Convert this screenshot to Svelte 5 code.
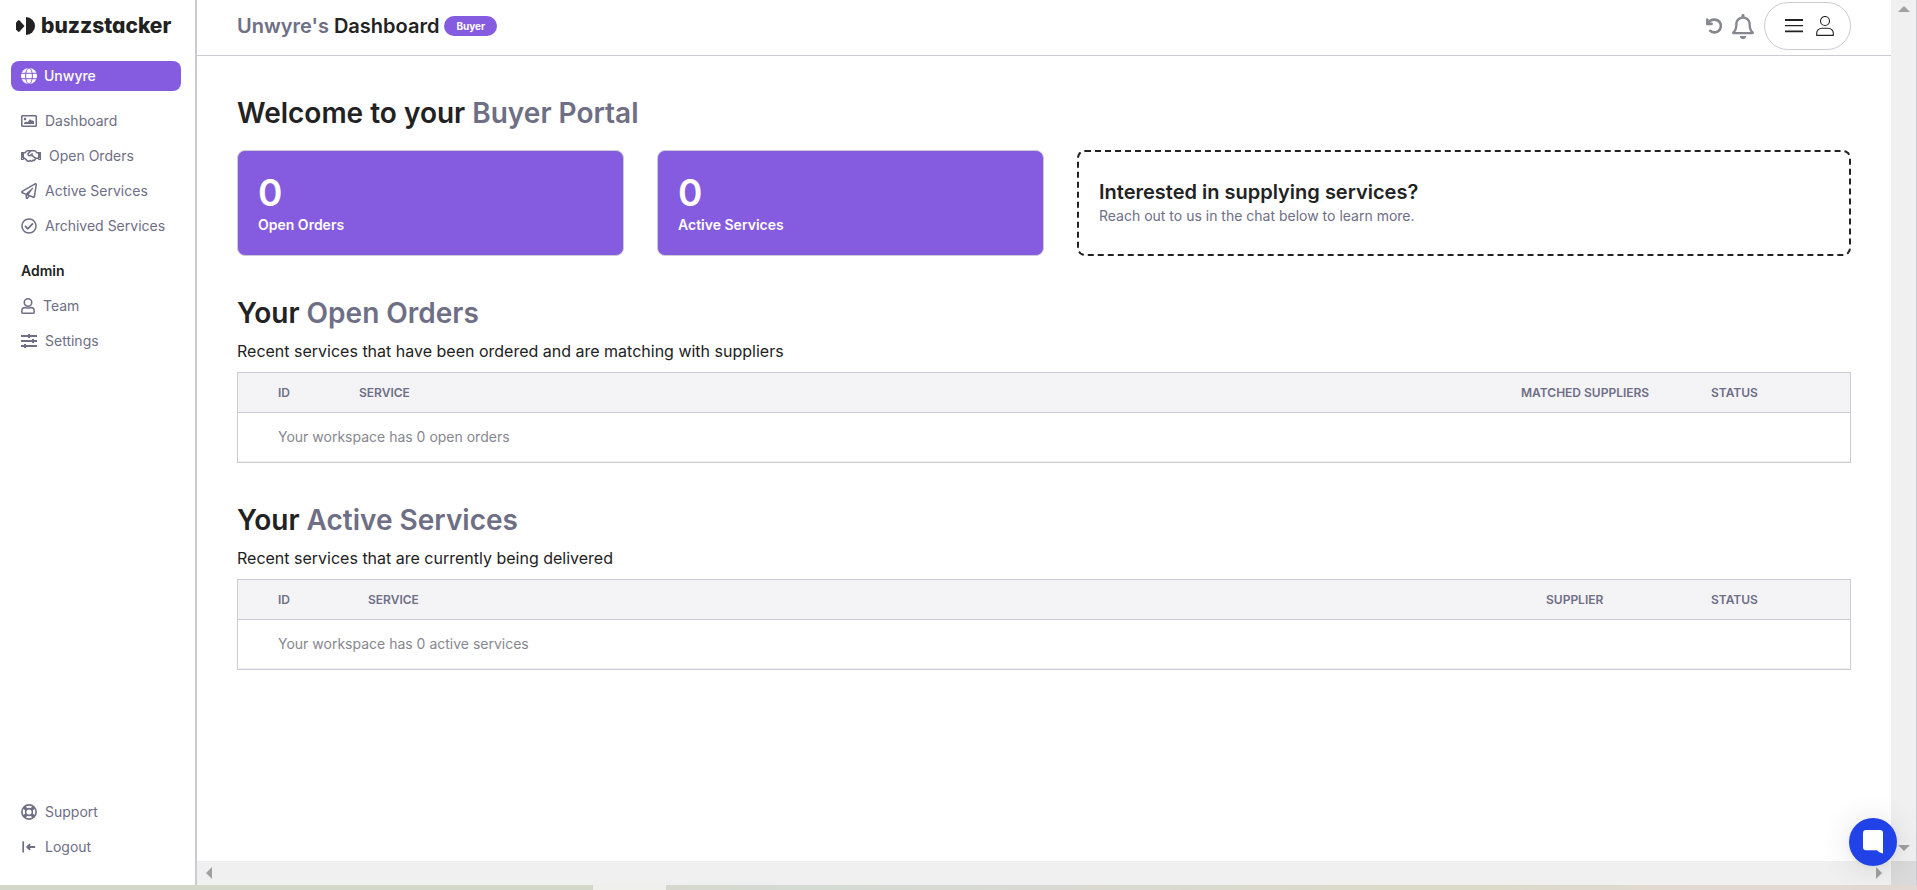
<script>
  const mainLinks = [
    { icon: 'image', label: 'Dashboard' },
    { icon: 'handshake', label: 'Open Orders' },
    { icon: 'plane', label: 'Active Services' },
    { icon: 'check', label: 'Archived Services' }
  ];
  const adminLinks = [
    { icon: 'user', label: 'Team' },
    { icon: 'sliders', label: 'Settings' }
  ];
  const footLinks = [
    { icon: 'ring', label: 'Support' },
    { icon: 'logout', label: 'Logout' }
  ];
  const stats = [
    { value: 0, label: 'Open Orders' },
    { value: 0, label: 'Active Services' }
  ];
  const sections = [
    {
      id: 'orders',
      title: 'Open Orders',
      text: 'Recent services that have been ordered and are matching with suppliers',
      third: 'Matched suppliers',
      empty: 'Your workspace has 0 open orders'
    },
    {
      id: 'services',
      title: 'Active Services',
      text: 'Recent services that are currently being delivered',
      third: 'Supplier',
      empty: 'Your workspace has 0 active services'
    }
  ];
</script>

{#snippet icon(name)}
  {#if name === 'image'}
    <svg width="16" height="16" viewBox="0 0 512 512" fill="currentColor" aria-hidden="true"><path d="M464 64H48C21.49 64 0 85.49 0 112v288c0 26.51 21.49 48 48 48h416c26.51 0 48-21.49 48-48V112c0-26.51-21.49-48-48-48zm-6 336H54a6 6 0 0 1-6-6V118a6 6 0 0 1 6-6h404a6 6 0 0 1 6 6v276a6 6 0 0 1-6 6zM128 152c-22 0-40 18-40 40s18 40 40 40 40-18 40-40-18-40-40-40zM96 352h320v-80l-32-32h-48l-24-32h-40l-24 32-24 48-40-8-40 8-48 24z" /></svg>
  {:else if name === 'handshake'}
    <svg width="20" height="16" viewBox="0 0 640 512" fill="currentColor" aria-hidden="true"><path d="M519.2 127.9l-47.6-47.6A56.252 56.252 0 0 0 432 64H205.2c-14.8 0-29.1 5.9-39.6 16.3L118 127.9H0v255.7h64c17.6 0 31.8-14.2 31.9-31.7h9.1l84.6 76.4c30.9 25.1 73.8 25.7 105.6 3.8 12.5 10.8 26 15.9 41.1 15.9 18.2 0 35.3-7.4 48.8-24 22.1 8.7 48.2 2.6 64-16.8l26.2-32.3c5.6-6.9 9.1-14.8 10.9-23h57.9c.1 17.5 14.4 31.7 31.9 31.7h64V127.9H519.2zM48 351.6c-8.8 0-16-7.2-16-16s7.2-16 16-16 16 7.2 16 16c0 8.9-7.2 16-16 16zm390-6.9l-26.1 32.2c-2.8 3.4-7.8 4-11.3 1.2l-23.900-19.400-30 36.500c-6 7.300-15 4.800-18 2.400l-36.800-31.500-15.600 19.200c-13.900 17.100-39.200 19.700-55.300 6.600l-97.300-88H96V175.8h41.9l61.7-61.6c2-.8 3.7-1.5 5.7-2.3H262l-38.7 35.5c-29.4 26.9-31.1 72.3-4.4 101.3 14.8 16.2 61.2 41.2 101.5 4.4l8.2-7.5 108.2 87.8c3.4 2.8 3.9 7.9 1.2 11.3zm106-40.8h-69.2c-2.3-2.8-4.9-5.4-7.7-7.7l-102.7-83.4 12.5-11.4c6.5-6 7-16.1 1-22.6L367 167.1c-6-6.5-16.1-6.9-22.6-1l-55.2 50.6c-9.5 8.700-25.700 9.400-34.600 0-9.300-9.900-8.500-25.100 1.200-33.900l65.6-60.100c7.400-6.800 17-10.500 27-10.500l83.700-.2c2.100 0 4.100.8 5.500 2.300l61.700 61.600H544v128zm48 47.700c-8.800 0-16-7.200-16-16s7.200-16 16-16 16 7.200 16 16c0 8.900-7.200 16-16 16z" /></svg>
  {:else if name === 'plane'}
    <svg width="16" height="16" viewBox="0 0 512 512" fill="currentColor" aria-hidden="true"><path d="M440 6.5L24 246.4c-34.4 19.9-31.1 70.8 5.7 85.9L144 379.6V464c0 46.4 59.2 65.5 86.6 28.6l43.8-59.1 111.9 46.2c5.9 2.4 12.1 3.6 18.3 3.6 8.2 0 16.3-2.1 23.6-6.2 12.8-7.2 21.6-20 23.9-34.5l59.4-387.2c6.1-40.1-36.9-68.8-71.5-48.9zM192 464v-64.6l36.6 15.1L192 464zm212.6-28.7l-153.8-63.5L391 169.5c10.7-15.5-9.5-33.5-23.7-21.2L155.8 332.6 48 288 464 48l-59.4 387.3z" /></svg>
  {:else if name === 'check'}
    <svg width="16" height="16" viewBox="0 0 512 512" fill="currentColor" aria-hidden="true"><path d="M256 8C119.033 8 8 119.033 8 256s111.033 248 248 248 248-111.033 248-248S392.967 8 256 8zm0 48c110.532 0 200 89.451 200 200 0 110.532-89.451 200-200 200-110.532 0-200-89.451-200-200 0-110.532 89.451-200 200-200m140.204 130.267l-22.536-22.718c-4.667-4.705-12.265-4.736-16.97-.068L215.346 303.697l-59.792-60.277c-4.667-4.705-12.265-4.736-16.97-.069l-22.719 22.536c-4.705 4.667-4.736 12.265-.068 16.971l90.781 91.516c4.667 4.705 12.265 4.736 16.97.068l172.589-171.204c4.704-4.668 4.734-12.266.067-16.971z" /></svg>
  {:else if name === 'user'}
    <svg width="14" height="16" viewBox="0 0 14 16" fill="none" stroke="currentColor" stroke-width="1.5" aria-hidden="true"><circle cx="7" cy="4.5" r="3.75" /><path d="M4.2 9.6c1 .4 1.700.5 2.800.5s1.800-.1 2.800-.5c2.100 0 3.450 1.700 3.450 3.600v1c0 .6-.4 1.050-1 1.050H1.750c-.6 0-1-.45-1-1.050v-1c0-1.900 1.350-3.600 3.450-3.600z" /></svg>
  {:else if name === 'sliders'}
    <svg width="16" height="16" viewBox="0 0 16 16" fill="none" stroke="currentColor" stroke-width="2" aria-hidden="true"><path d="M0 3h16M0 8h16M0 13h16" /><path d="M8 1v4M12 6v4M4 11v4" /></svg>
  {:else if name === 'ring'}
    <svg width="16" height="16" viewBox="0 0 16 16" fill="none" stroke="currentColor" aria-hidden="true"><circle cx="8" cy="8" r="7.100" stroke-width="1.700" /><circle cx="8" cy="8" r="3.400" stroke-width="1.600" /><path d="M2.800 2.800l3 3M13.200 2.800l-3 3M2.800 13.200l3-3M13.200 13.200l-3-3" stroke-width="3.200" /></svg>
  {:else}
    <svg width="16" height="16" viewBox="0 0 16 16" fill="none" stroke="currentColor" stroke-width="1.900" stroke-linecap="round" stroke-linejoin="round" aria-hidden="true"><path d="M2.200 2.300v11.200" stroke-width="1.700" stroke-linecap="butt" /><path d="M13.400 8H6.200M8.600 5.700L6.200 8l2.400 2.300" /></svg>
  {/if}
{/snippet}

{#snippet links(items)}
  <ul>
    {#each items as item}
      <li><a href="#top">{@render icon(item.icon)}<span>{item.label}</span></a></li>
    {/each}
  </ul>
{/snippet}

<div class="screen" id="top">
  <aside>
    <a class="brand" href="#top">
      <svg width="19" height="18" viewBox="0 0 19 18" fill="currentColor" aria-hidden="true"><path d="M0 5.500L2.500 3l1.100.5L8.500 9l-4.900 5.500-1.100.5L0 12.500z" /><path d="M10 0a9 9 0 0 1 0 18z" /></svg>
      <span>buzzstacker</span>
    </a>
    <button class="workspace">
      <svg width="16" height="16" viewBox="0 0 16 16" aria-hidden="true"><circle cx="8" cy="8" r="8" fill="#fff" /><g fill="none" stroke="#855be0" stroke-width="1"><ellipse cx="8" cy="8" rx="3.400" ry="8" /><path d="M0 5.300h16M0 10.700h16" /></g></svg>
      <span>Unwyre</span>
    </button>
    <nav>
      {@render links(mainLinks)}
      <h3>Admin</h3>
      {@render links(adminLinks)}
      <div class="foot">{@render links(footLinks)}</div>
    </nav>
  </aside>

  <div class="view">
    <header>
      <div class="title"><h1><span>Unwyre's</span> Dashboard</h1><b class="badge">Buyer</b></div>
      <div class="tools">
        <button aria-label="Refresh"><svg width="16" height="16" viewBox="0 0 16 16" fill="none" stroke="#87878f" stroke-width="2.600" stroke-linecap="round" stroke-linejoin="round" aria-hidden="true"><path d="M1.300 1.600v4.300h4.300" /><path d="M1.800 5.600C3 3.200 5.500 1.600 8.400 1.600a6.400 6.400 0 1 1-4.200 11.200" /></svg></button>
        <button aria-label="Notifications"><svg width="22" height="25" viewBox="0 0 448 512" fill="#87878f" aria-hidden="true"><path d="M439.390 362.290c-19.320-20.760-55.470-51.990-55.470-154.290 0-77.700-54.480-139.900-127.940-155.160V32c0-17.670-14.320-32-31.980-32s-31.980 14.330-31.980 32v20.840C118.560 68.100 64.080 130.300 64.080 208c0 102.300-36.150 133.530-55.470 154.290-6 6.450-8.660 14.160-8.610 21.710.11 16.400 12.980 32 32.100 32h383.800c19.120 0 32-15.600 32.100-32 .05-7.550-2.610-15.270-8.610-21.710zM67.530 368c21.220-27.970 44.420-74.330 44.530-159.420 0-.2-.06-.38-.06-.58 0-61.860 50.140-112 112-112s112 50.140 112 112c0 .2-.06.38-.06.58.11 85.100 23.310 131.460 44.530 159.420H67.530zM224 512c35.320 0 63.970-28.650 63.970-64H160.030c0 35.350 28.650 64 63.970 64z" /></svg></button>
        <button class="account" aria-label="Account menu">
          <svg width="18" height="14" viewBox="0 0 18 14" fill="#222" aria-hidden="true"><path d="M0 0h18v2H0zM0 6h18v1.300H0zM0 11.500h18v1.700H0z" /></svg>
          <svg width="18" height="20" viewBox="0 0 18 20" fill="none" stroke="#222" stroke-width="1.100" aria-hidden="true"><circle cx="9" cy="5" r="4.500" /><path d="M6 12.200h6c3 0 5.300 2.300 5.300 5v2.200H.7v-2.200c0-2.700 2.300-5 5.300-5z" /></svg>
        </button>
      </div>
    </header>

    <main>
      <h2>Welcome to your <span>Buyer Portal</span></h2>
      <div class="cards">
        {#each stats as stat}
          <div class="card"><strong>{stat.value}</strong><span>{stat.label}</span></div>
        {/each}
        <div class="pitch"><h4>Interested in supplying services?</h4><p>Reach out to us in the chat below to learn more.</p></div>
      </div>
      {#each sections as section}
        <section>
          <h2>Your <span>{section.title}</span></h2>
          <p>{section.text}</p>
          <table class={section.id}>
            <colgroup><col class="c-id" /><col /><col class="c-third" /><col class="c-status" /></colgroup>
            <thead><tr><th>ID</th><th>Service</th><th>{section.third}</th><th>Status</th></tr></thead>
            <tbody><tr><td colspan="4">{section.empty}</td></tr></tbody>
          </table>
        </section>
      {/each}
    </main>

    <div class="vbar">
      <svg width="12" height="6" viewBox="0 0 12 6" aria-hidden="true"><path d="M0 6l6-6 6 6z" fill="#a0a0a0" /></svg>
      <svg width="12" height="6" viewBox="0 0 12 6" aria-hidden="true"><path d="M0 0l6 6 6-6z" fill="#a0a0a0" /></svg>
    </div>
    <div class="hbar">
      <svg width="6" height="12" viewBox="0 0 6 12" aria-hidden="true"><path d="M6 0L0 6l6 6z" fill="#a0a0a0" /></svg>
      <svg width="6" height="12" viewBox="0 0 6 12" aria-hidden="true"><path d="M0 0l6 6-6 6z" fill="#a0a0a0" /></svg>
    </div>
    <div class="corner"></div>
  </div>
  <div class="strip"></div>
  <button class="chat" aria-label="Open chat">
    <svg width="20" height="24" viewBox="0 0 20 24" fill="#fff" aria-hidden="true"><path d="M3 0h14a3 3 0 0 1 3 3v20.600c-2.300-.5-4.200-1.500-6-3.300H3a3 3 0 0 1-3-3V3a3 3 0 0 1 3-3z" /></svg>
  </button>
</div>

<style>
  :global(body) { margin: 0; }
  .screen {
    --ink: #222;
    --muted: #6e6e85;
    --line: #cbcbd3;
    --purple: #855be0;
    box-sizing: border-box;
    min-height: 100vh;
    display: grid;
    grid-template: 1fr 5px / 197px minmax(0, 1fr);
    font-family: Inter, sans-serif;
    font-size: 14px;
    line-height: 20px;
    color: var(--ink);
    background: #fff;
  }
  .screen * { box-sizing: border-box; }
  h1, h2, h3, h4, p, ul { margin: 0; padding: 0; }
  h1, h2, h3, h4 { font-weight: 600; }
  button { border: 0; padding: 0; background: none; font: inherit; color: inherit; cursor: pointer; }
  a { color: inherit; text-decoration: none; }
  svg { display: block; flex: none; }

  aside {
    display: flex;
    flex-direction: column;
    border-right: 2px solid var(--line);
    padding: 12px 14px 21px 11px;
  }
  .brand {
    display: flex;
    align-items: center;
    gap: 6px;
    height: 28px;
    padding-left: 5px;
    font-size: 21px;
    font-weight: 800;
    font-feature-settings: 'cv11';
  }
  .workspace {
    display: flex;
    align-items: center;
    gap: 7px;
    height: 30px;
    margin-top: 21px;
    padding: 0 10px;
    border-radius: 8px;
    background: var(--purple);
    color: #fff;
    font-weight: 500;
  }
  nav { flex: 1; display: flex; flex-direction: column; padding: 12px 0 0 10px; }
  ul { list-style: none; }
  nav a { display: flex; align-items: center; gap: 8px; height: 35px; color: var(--muted); white-space: nowrap; }
  h3 { margin-top: 10px; font-size: 14px; line-height: 35px; }
  .foot { margin-top: auto; }

  .view {
    display: grid;
    grid-template: 56px minmax(0, 1fr) 24px / minmax(0, 1fr) 25px;
    border-right: 1px solid var(--line);
  }
  header {
    display: flex;
    align-items: flex-start;
    justify-content: space-between;
    padding: 2px 40px 0;
    border-bottom: 1px solid var(--line);
  }
  .title, .tools { display: flex; align-items: center; height: 48px; }
  .title { gap: 5px; }
  h1 { font-size: 20px; line-height: 24px; }
  h1 span, h2 span { color: var(--muted); }
  .badge {
    padding: 0 12px;
    border-radius: 10px;
    background: var(--purple);
    color: #fff;
    font-size: 10px;
    line-height: 20px;
  }
  .tools { gap: 10px; }
  .account {
    display: flex;
    align-items: center;
    gap: 13px;
    width: 87px;
    height: 48px;
    padding-left: 20px;
    border: 1px solid var(--line);
    border-radius: 24px;
  }

  main { padding: 40px 40px 0; }
  h2 { font-size: 28px; line-height: 34px; }
  .cards { display: grid; grid-template-columns: 1fr 1fr 2fr; gap: 33px; margin-top: 20px; }
  .card, .pitch {
    display: flex;
    flex-direction: column;
    justify-content: center;
    height: 106px;
    padding: 0 20px;
    border-radius: 8px;
  }
  .card { border: 1px solid var(--line); background: var(--purple); color: #fff; font-weight: 600; }
  .card strong { font-size: 37px; line-height: 44px; font-weight: 600; }
  .pitch { border: 2px dashed var(--ink); }
  .pitch h4 { font-size: 20px; line-height: 26px; }
  .pitch p { line-height: 22px; color: var(--muted); }

  section { margin-top: 40px; }
  section p { margin-top: 8px; font-size: 16px; line-height: 26px; }
  table {
    width: 100%;
    margin-top: 8px;
    table-layout: fixed;
    border-collapse: separate;
    border-spacing: 0;
    border: 1px solid var(--line);
  }
  th {
    height: 40px;
    padding: 0;
    border-bottom: 1px solid var(--line);
    background: #f4f4f7;
    color: var(--muted);
    font-size: 12px;
    font-weight: 600;
    text-align: left;
    text-transform: uppercase;
  }
  td { height: 49px; padding: 0; border-bottom: 1px solid #f0f0f4; color: #87878f; }
  th:first-child, td:first-child { padding-left: 40px; }
  .c-status { width: 139px; }
  .orders .c-id { width: 121px; }
  .orders .c-third { width: 190px; }
  .services .c-id { width: 130px; }
  .services .c-third { width: 165px; }

  .vbar, .hbar { display: flex; align-items: center; justify-content: space-between; background: #f0f0f0; }
  .vbar { grid-area: 1 / 2 / 3 / 3; flex-direction: column; padding: 6px 0 10px; }
  .hbar { grid-area: 3 / 1 / 4 / 2; padding: 0 9px; }
  .corner { grid-area: 3 / 2 / 4 / 3; background: #dadada; }
  .strip {
    grid-column: 1 / 3;
    background: linear-gradient(90deg, #d2d9cb 0 593px, #efefeb 593px 666px, #d6d8ce 666px, #d3dbd3 42%, #d9d9d3 55%, #dadbc8 75%, #e2d9d4 90%, #e2d9d4);
  }
  .chat {
    position: fixed;
    right: 20px;
    bottom: 24px;
    display: grid;
    place-items: center;
    width: 48px;
    height: 48px;
    border-radius: 50%;
    background: #2142e7;
    box-shadow: 0 1px 6px rgba(0, 0, 0, 0.06), 0 2px 32px rgba(0, 0, 0, 0.12);
  }
</style>
